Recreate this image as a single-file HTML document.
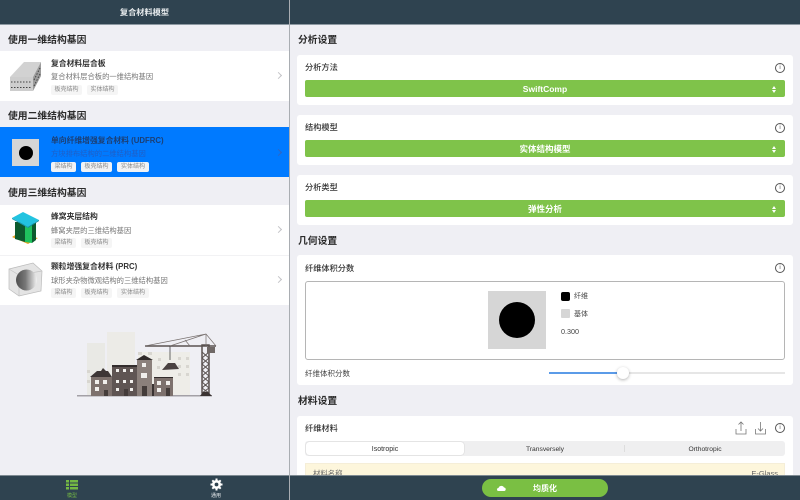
<!DOCTYPE html>
<html><head><meta charset="utf-8">
<style>
html,body{margin:0;padding:0;width:800px;height:500px;overflow:hidden;background:#efeff4;font-family:"Liberation Sans","Noto Sans CJK SC",sans-serif;color:#333}
body{filter:blur(.3px)}
div,span,svg{position:absolute;box-sizing:border-box}
.t{white-space:nowrap;line-height:12px}
.h{font-size:9.800px;font-weight:700;color:#2b2b2b;height:12px}
.row{left:0;width:289px;height:50px;background:#fff}
.tt{left:51px;font-size:7.800px;font-weight:700;color:#333}
.st{left:51px;font-size:7.300px;color:#777}
.tag{height:10px;background:#f5f5f5;border-radius:2px;font-size:6px;line-height:10px;color:#888;text-align:center}
.chev{left:276px;width:5px;height:5px;border-top:1px solid #c4c4c8;border-right:1px solid #c4c4c8;transform:rotate(45deg)}
.card{left:297px;width:496px;background:#fff;border-radius:3px}
.lab{left:305px;font-size:8.200px;color:#333;font-weight:500}
.sel{left:305px;width:480px;height:17px;background:#7fc34a;border-radius:2px;color:#fff;font-size:8.500px;font-weight:700;line-height:18px;text-align:center}
.info{left:775px;width:10px;height:10px;border:1px solid #555;border-radius:50%;font-size:6px;line-height:8px;text-align:center;color:#555}
.ud{left:771.500px;width:0;height:0;border-left:2.500px solid transparent;border-right:2.500px solid transparent}
</style></head><body>

<!-- headers -->
<div style="left:0;top:0;width:800px;height:24px;background:#2f4350"></div>
<div style="left:0;top:24px;width:800px;height:1px;background:#8d99a2"></div>
<div class="t" style="left:0;top:7px;width:289px;text-align:center;color:#e8ecee;font-size:8.200px;font-weight:700">复合材料模型</div>
<div style="left:289px;top:0;width:1px;height:500px;background:#a9adb2"></div>

<!-- left -->
<div class="t h" style="left:8px;top:35px">使用一维结构基因</div>
<div class="row" style="top:51px"></div>
<svg style="left:8px;top:60px" width="34" height="33" viewBox="0 0 34 33">
<path d="M2 17 L16 2 L33 2 L25 17Z" fill="#d2d2d2"/>
<path d="M25 17 L33 2 L33 16 L25 31Z" fill="#9c9c9c"/>
<path d="M2 17H25V31H2Z" fill="#cdcdcd"/>
<path d="M3 22H24M3 27.500H24" stroke="#444" stroke-width="1" stroke-dasharray="1.500 1.500"/>
<path d="M26 20L32 8M26 26L32 14" stroke="#444" stroke-width="1" stroke-dasharray="1.500 1.500"/>
</svg>
<div class="t tt" style="top:58px">复合材料层合板</div>
<div class="t st" style="top:71px">复合材料层合板的一维结构基因</div>
<div class="tag" style="left:51px;top:85px;width:31px">板壳结构</div>
<div class="tag" style="left:87px;top:85px;width:31px">实体结构</div>
<div class="chev" style="top:73px"></div>

<div class="t h" style="left:8px;top:111px">使用二维结构基因</div>
<div class="row" style="top:127px;background:#007aff"></div>
<div style="left:12px;top:139px;width:27px;height:27px;background:#d6d6d6"></div>
<div style="left:18.500px;top:145.500px;width:14px;height:14px;background:#000;border-radius:50%"></div>
<div class="t tt" style="top:135px;color:#1c3f74">单向纤维增强复合材料 (UDFRC)</div>
<div class="t st" style="top:148px;color:#1f5fc6">方块排布结构的二维结构基因</div>
<div class="tag" style="left:51px;top:162px;width:25px;background:#f1f3f6">梁结构</div>
<div class="tag" style="left:81px;top:162px;width:31px;background:#f1f3f6">板壳结构</div>
<div class="tag" style="left:117px;top:162px;width:32px;background:#f1f3f6">实体结构</div>
<div class="chev" style="top:150px;border-color:#2f66c4"></div>

<div class="t h" style="left:8px;top:188px">使用三维结构基因</div>
<div class="row" style="top:205px"></div>
<div class="row" style="top:255px;border-top:1px solid #f2f2f4"></div>
<svg style="left:10px;top:211px" width="31" height="36" viewBox="0 0 31 36">
<path d="M2 26L7 23L28 27L18 33Z" fill="#e6a020"/>
<path d="M5 11H15V31L5 28Z" fill="#0c5a2e"/>
<path d="M15 12H22V32L15 31Z" fill="#1fc25e"/>
<path d="M22 12H26V29L22 32Z" fill="#0c5a2e"/>
<path d="M2 7L13 1L29 9L18 16Z" fill="#22c3e0"/>
<path d="M2 7L18 16V17L2 8Z" fill="#1a9ab5"/>
<path d="M18 16L29 9V10L18 17Z" fill="#148aa0"/>
</svg>
<div class="t tt" style="top:211px">蜂窝夹层结构</div>
<div class="t st" style="top:225px">蜂窝夹层的三维结构基因</div>
<div class="tag" style="left:51px;top:238px;width:25px">梁结构</div>
<div class="tag" style="left:81px;top:238px;width:31px">板壳结构</div>
<div class="chev" style="top:227px"></div>

<svg style="left:8px;top:262px" width="35" height="35" viewBox="0 0 35 35">
<defs><linearGradient id="g" x1="0" x2="1" y1="0.500" y2="0.500"><stop offset="0" stop-color="#4f4f4f"/><stop offset="0.450" stop-color="#777"/><stop offset="1" stop-color="#f2f2f2"/></linearGradient></defs>
<path d="M1 7 L25 1 L34 9 L33 29 L11 34 L1 27Z" fill="#e4e4e4" stroke="#bbb" stroke-width=".7"/>
<path d="M1 7L11 13L34 9M11 13V34" fill="none" stroke="#c4c4c4" stroke-width=".7"/>
<circle cx="18.500" cy="18" r="10.500" fill="url(#g)"/>
</svg>
<div class="t tt" style="top:261px">颗粒增强复合材料 (PRC)</div>
<div class="t st" style="top:275px">球形夹杂物微观结构的三维结构基因</div>
<div class="tag" style="left:51px;top:288px;width:25px">梁结构</div>
<div class="tag" style="left:81px;top:288px;width:31px">板壳结构</div>
<div class="tag" style="left:117px;top:288px;width:32px">实体结构</div>
<div class="chev" style="top:277px"></div>

<!-- illustration; svg origin (70,330) -->
<svg style="left:70px;top:330px" width="150" height="70" viewBox="0 0 150 70">
<path d="M17 66V13H35V66Z" fill="#e9e9e5"/>
<path d="M37 66V2H65V66Z" fill="#ecebe7"/>
<path d="M68 66V22H120V66Z" fill="#eeede8"/>
<g fill="#d8d6d0"><rect x="68" y="22" width="4" height="3"/><rect x="78" y="22" width="4" height="3"/><rect x="88" y="28" width="3" height="3"/><rect x="108" y="27" width="3" height="3"/><rect x="116" y="27" width="3" height="3"/><rect x="108" y="35" width="3" height="3"/><rect x="116" y="35" width="3" height="3"/><rect x="108" y="43" width="3" height="3"/><rect x="116" y="43" width="3" height="3"/><rect x="87" y="36" width="3" height="3"/><rect x="17" y="40" width="3" height="3"/><rect x="17" y="50" width="3" height="3"/></g>
<rect x="7" y="65" width="135" height="1.500" fill="#a3a0a6"/>
<path d="M21 66V47H42V66Z" fill="#7d716d"/>
<path d="M20 47L27 41H31L33 38L36 41H38L42 47Z" fill="#3d3636"/>
<path d="M42 66V35H67V66Z" fill="#5f5553"/>
<path d="M42 35H67V37H42Z" fill="#332d2d"/>
<path d="M67 66V30H82V66Z" fill="#8b807b"/>
<path d="M66 30L74 25L83 30Z" fill="#2f2a2a"/>
<path d="M82 66V54H84V66Z" fill="#3a3332"/>
<path d="M84 66V47H103V66Z" fill="#7d716d"/>
<path d="M84 47H103V48H84Z" fill="#332d2d"/>
<g fill="#f1efec"><rect x="25" y="50" width="4" height="4"/><rect x="33" y="50" width="4" height="4"/><rect x="25" y="57" width="4" height="4"/><rect x="46" y="39" width="3" height="3"/><rect x="53" y="39" width="3" height="3"/><rect x="60" y="39" width="3" height="3"/><rect x="46" y="50" width="3" height="3"/><rect x="53" y="50" width="3" height="3"/><rect x="60" y="50" width="3" height="3"/><rect x="46" y="58" width="3" height="3"/><rect x="60" y="58" width="3" height="3"/><rect x="71" y="43" width="6" height="5"/><rect x="72" y="33" width="4" height="4"/><rect x="87" y="51" width="4" height="4"/><rect x="96" y="51" width="4" height="4"/><rect x="87" y="58" width="4" height="4"/></g>
<path d="M34 66V60H38V66ZM54 66V59H58V66ZM72 66V56H77V66ZM96 66V58H100V66Z" fill="#443c3a"/>
<path d="M132 15H139V63H132Z" fill="none" stroke="#5a5250" stroke-width="1.500"/>
<path d="M132 22L139 28L132 34L139 40L132 46L139 52L132 58L139 63M139 22L132 28L139 34L132 40L139 46L132 52L139 58L132 63" stroke="#5a5250" stroke-width="1" fill="none"/>
<path d="M130 66L133 62H138L142 66Z" fill="#3a3332"/>
<path d="M75 16H146" stroke="#5a5250" stroke-width="1.500"/>
<path d="M75 16L136 4L146 16M100 16L136 4M136 4V16M115 10L120 16" stroke="#77706e" stroke-width=".7" fill="none"/>
<rect x="137" y="17" width="8" height="6" fill="#6f6866"/>
<path d="M100 16V30" stroke="#444" stroke-width=".8"/>
<path d="M92 40L98 33H105L109 39Z" fill="#4a4241"/>
</svg>

<!-- left bottom bar -->
<div style="left:0;top:475px;width:289px;height:25px;background:#2f4350;border-top:1px solid #7e8a92"></div>
<svg style="left:66px;top:480px" width="12" height="10" viewBox="0 0 12 10"><path d="M0 0h3v2.500H0zM4 0h8v2.500H4zM0 3.500h3V6H0zM4 3.500h8V6H4zM0 7h3v2.500H0zM4 7h8v2.500H4z" fill="#74b944"/></svg>
<div class="t" style="left:62px;top:493px;width:20px;text-align:center;font-size:5px;line-height:7px;color:#74b944">模型</div>
<svg style="left:210px;top:478px" width="13" height="13" viewBox="0 0 13 13"><circle cx="6.500" cy="6.500" r="3.200" fill="none" stroke="#fff" stroke-width="2.600"/><path d="M6.500 .5V3M6.500 10V12.500M.5 6.500H3M10 6.500H12.500M2.300 2.300L4 4M9 9L10.700 10.700M2.300 10.700L4 9M9 4L10.700 2.300" stroke="#fff" stroke-width="2"/></svg>
<div class="t" style="left:206px;top:493px;width:20px;text-align:center;font-size:5px;line-height:7px;color:#e8ecee">通用</div>

<!-- right -->
<div class="t h" style="left:298px;top:35px">分析设置</div>
<div class="card" style="top:55px;height:50px"></div>
<div class="t lab" style="top:62px">分析方法</div>
<div class="info" style="top:63px">i</div>
<div class="sel" style="top:80px">SwiftComp</div>
<div class="ud" style="top:85.500px;border-bottom:3px solid #fff"></div><div class="ud" style="top:89.500px;border-top:3px solid #fff"></div>

<div class="card" style="top:115px;height:50px"></div>
<div class="t lab" style="top:122px">结构模型</div>
<div class="info" style="top:123px">i</div>
<div class="sel" style="top:140px">实体结构模型</div>
<div class="ud" style="top:145.500px;border-bottom:3px solid #fff"></div><div class="ud" style="top:149.500px;border-top:3px solid #fff"></div>

<div class="card" style="top:175px;height:50px"></div>
<div class="t lab" style="top:182px">分析类型</div>
<div class="info" style="top:183px">i</div>
<div class="sel" style="top:200px">弹性分析</div>
<div class="ud" style="top:205.500px;border-bottom:3px solid #fff"></div><div class="ud" style="top:209.500px;border-top:3px solid #fff"></div>

<div class="t h" style="left:298px;top:236px">几何设置</div>
<div class="card" style="top:255px;height:130px"></div>
<div class="t lab" style="top:263px">纤维体积分数</div>
<div class="info" style="top:263px">i</div>
<div style="left:305px;top:281px;width:480px;height:79px;border:1px solid #b5b5b5;border-radius:3px"></div>
<div style="left:488px;top:291px;width:58px;height:58px;background:#d6d6d6"></div>
<div style="left:498.500px;top:302px;width:36px;height:36px;background:#000;border-radius:50%"></div>
<div style="left:561px;top:292px;width:9px;height:9px;background:#000;border-radius:2px"></div>
<div class="t" style="left:574px;top:291px;font-size:7px;color:#444">纤维</div>
<div style="left:561px;top:309px;width:9px;height:9px;background:#d6d6d6;border-radius:1px"></div>
<div class="t" style="left:574px;top:309px;font-size:7px;color:#444">基体</div>
<div class="t" style="left:561px;top:326px;font-size:7.200px;color:#444">0.300</div>
<div class="t" style="left:305px;top:368px;font-size:7.500px;color:#444">纤维体积分数</div>
<div style="left:549px;top:372px;width:236px;height:2px;background:#e6e6e6"></div>
<div style="left:549px;top:372px;width:72px;height:2px;background:#5b9be8"></div>
<div style="left:617px;top:367px;width:12px;height:12px;background:#fff;border-radius:50%;box-shadow:0 1px 3px rgba(0,0,0,.3)"></div>

<div class="t h" style="left:298px;top:396px">材料设置</div>
<div class="card" style="top:416px;height:70px"></div>
<div class="t lab" style="top:423px">纤维材料</div>
<svg style="left:734px;top:421px" width="32" height="14" viewBox="0 0 32 14" fill="none" stroke="#777" stroke-width=".8"><path d="M2 8V13H12V8M7 10V1M4.500 3.500L7 1L9.500 3.500"/><path d="M22 8V13H32V8M27 1V10M24.500 7.500L27 10L29.500 7.500" transform="translate(-.5,0)"/></svg>
<div class="info" style="top:423px">i</div>
<div style="left:305px;top:441px;width:480px;height:15px;background:#efeff0;border-radius:3px"></div>
<div style="left:306px;top:442px;width:158px;height:13px;background:#fff;border-radius:3px;box-shadow:0 0 1px rgba(0,0,0,.3)"></div>
<div style="left:624px;top:445px;width:1px;height:7px;background:#ddd"></div>
<div class="t" style="left:306px;top:444px;width:158px;text-align:center;font-size:7px;color:#333">Isotropic</div>
<div class="t" style="left:465px;top:444px;width:160px;text-align:center;font-size:6.700px;color:#333">Transversely</div>
<div class="t" style="left:625px;top:444px;width:160px;text-align:center;font-size:6.700px;color:#333">Orthotropic</div>
<div style="left:305px;top:463px;width:480px;height:14px;background:#fdf6dc;border:1px solid #f5eed8"></div>
<div class="t" style="left:313px;top:468px;font-size:7.400px;color:#666">材料名称</div>
<div class="t" style="left:699px;width:79px;top:468px;text-align:right;font-size:7.500px;color:#666">E-Glass</div>

<!-- right bottom bar -->
<div style="left:290px;top:475px;width:510px;height:25px;background:#2f4350;border-top:1px solid #7e8a92"></div>
<div style="left:482px;top:479px;width:126px;height:18px;background:#7abf43;border-radius:9px"></div>
<svg style="left:497px;top:485px" width="9" height="6" viewBox="0 0 9 6"><path d="M1.500 6A1.500 1.500 0 0 1 1.500 3A3 3 0 0 1 7 2.500A1.800 1.800 0 0 1 7.500 6Z" fill="#fff"/></svg>
<div class="t" style="left:482px;top:483px;width:126px;text-align:center;color:#fff;font-size:8px;font-weight:700">均质化</div>
</body></html>
